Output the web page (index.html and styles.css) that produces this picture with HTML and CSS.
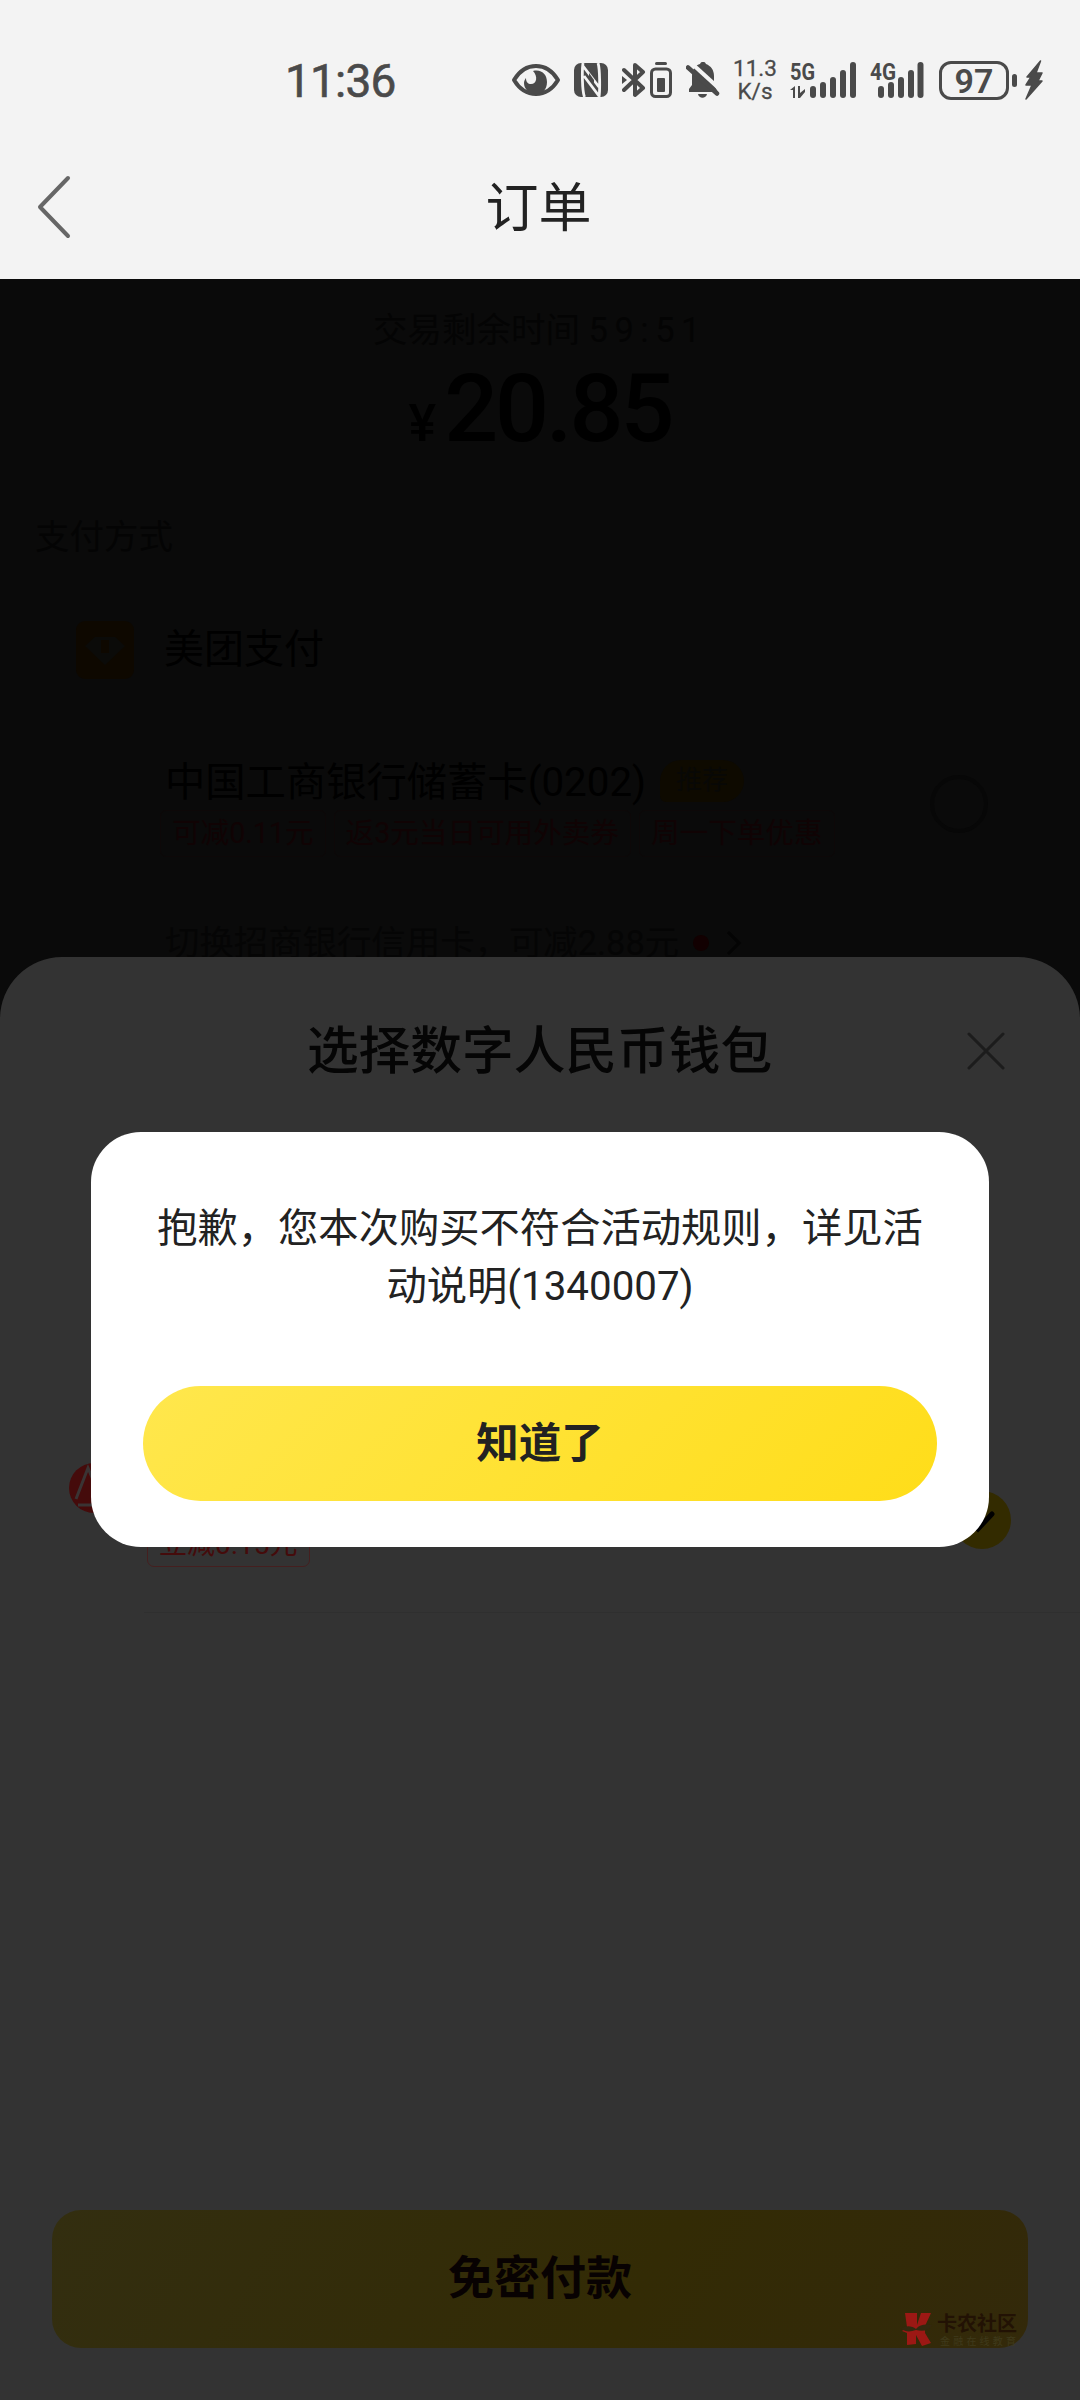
FILE: index.html
```html
<!DOCTYPE html>
<html lang="zh-CN">
<head>
  <meta charset="UTF-8">
  <meta name="viewport" content="width=device-width, initial-scale=1.0">
  <title>订单</title>
  <link rel="stylesheet" href="styles.css">
</head>
<body>
  <div class="screen">
    <header class="top">
      <div class="status-bar">
        <span class="time">11:36</span>
        <div class="status-icons">
          <svg class="eye" width="50" height="34" viewBox="0 0 50 34">
            <path d="M3 17C9 7 16 3 25 3s16 4 22 14c-6 10-13 14-22 14S9 27 3 17z" fill="none" stroke="#4a4a4a" stroke-width="4" stroke-linejoin="round"/>
            <path d="M22 8c9-2 14 4 14 11 0 8-5 12-11 12-7 0-12-5-12-11 0-2 1-4 2-5 0 4 2 6 5 6 6 0 7-8 2-13z"/>
          </svg>
          <svg class="nfc" width="34" height="34" viewBox="0 0 34 34">
            <rect width="34" height="34" rx="7"/>
            <path d="M10.500 34C8 28 8 6 9 0M24 0c2 6 2 28 1 34M9 3l16 21M10 13l15 20" fill="none" stroke="#f3f3f3" stroke-width="2.800"/>
            <path d="M15 15.500l5 6.500v-5l-5-7z"/>
          </svg>
          <svg class="bluetooth" width="50" height="36" viewBox="0 0 50 36">
            <path d="M2 8l19 18-8 7V3l8 7L2 28" fill="none" stroke="#4a4a4a" stroke-width="4" stroke-linejoin="round" stroke-linecap="round"/>
            <path d="M0 14l5 4-5 4z"/>
            <rect x="33" width="12" height="3" rx="1.500"/>
            <rect x="29.500" y="7" width="19" height="27.500" rx="4" fill="none" stroke="#4a4a4a" stroke-width="3"/>
            <rect x="35" y="16" width="8" height="14" rx="1"/>
          </svg>
          <svg class="bell" width="34" height="36" viewBox="0 0 34 36">
            <path d="M3 30V27l3-4V14C6 7 10 3 14 2c1-3 5-3 6 0 5 2 8 6 8 12v9l4 7zM12 32h9c-1 5-8 5-9 0z"/>
            <path d="M3 -1l34 31" stroke="#f3f3f3" stroke-width="4"/>
            <path d="M2 5.500l29 26" stroke="#4a4a4a" stroke-width="4.500" stroke-linecap="round"/>
          </svg>
          <div class="speed"><span>11.3</span><span>K/s</span></div>
          <svg class="signal-5g" width="68" height="40" viewBox="0 0 68 40">
            <text x="0" y="19.500" textLength="25" lengthAdjust="spacingAndGlyphs">5G</text>
            <path d="M0 30l5-4v12H3v-8zM8 26h2v7l5-4v3l-5 6H8z"/>
            <rect x="20" y="26" width="6" height="12" rx="3"/>
            <rect x="30" y="22" width="6" height="16" rx="3"/>
            <rect x="40" y="17" width="6" height="21" rx="3"/>
            <rect x="50" y="10" width="6" height="28" rx="3"/>
            <rect x="60" y="2" width="6" height="36" rx="3"/>
          </svg>
          <svg class="signal-4g" width="56" height="40" viewBox="0 0 56 40">
            <text x="0" y="19.500" textLength="26" lengthAdjust="spacingAndGlyphs">4G</text>
            <rect x="8" y="26" width="6" height="12" rx="3"/>
            <rect x="18" y="22" width="6" height="16" rx="3"/>
            <rect x="28" y="17" width="6" height="21" rx="3"/>
            <rect x="38" y="10" width="6" height="28" rx="3"/>
            <rect x="47.500" y="2" width="6" height="36" rx="3"/>
          </svg>
          <div class="battery">97</div>
          <div class="battery-tip"></div>
          <svg class="bolt" width="20" height="40" viewBox="0 0 20 40">
            <path d="M16.500 1L3 17h4l-5 8h6L2 39l16-18h-4l4-8h-6z" stroke="#4a4a4a" stroke-width="1.500" stroke-linejoin="round"/>
          </svg>
        </div>
      </div>
      <div class="nav-bar">
        <svg class="back" width="36" height="64" viewBox="0 0 36 64">
          <path d="M32 3L4 32l28 29" fill="none" stroke="#666" stroke-width="4" stroke-linecap="round" stroke-linejoin="round"/>
        </svg>
        <h1>订单</h1>
      </div>
    </header>

    <main class="cashier">
      <p class="countdown">交易剩余时间 <span>59:51</span></p>
      <p class="amount"><span>¥</span>20.85</p>
      <p class="section-title">支付方式</p>
      <div class="pay-row">
        <svg class="pay-logo" width="58" height="58" viewBox="0 0 58 58">
          <rect width="58" height="58" rx="9" fill="#0e0800"/>
          <path d="M9 25l10-9h20l10 9-20 19z" fill="#0b0b09"/>
          <path d="M25 19h8v13h-8z" fill="#0e0800"/>
        </svg>
        <span>美团支付</span>
      </div>
      <div class="card-row">
        <div class="card-info">
          <div class="card-name"><span>中国工商银行储蓄卡(0202)</span><em>推荐</em></div>
          <div class="tags">
            <span>可减0.11元</span><span>返3元当日可用外卖券</span><span>周一下单优惠</span>
          </div>
        </div>
        <div class="radio"></div>
      </div>
      <div class="switch-row">
        <span>切换招商银行信用卡，可减2.88元</span>
        <i class="dot"></i>
        <svg width="16" height="26" viewBox="0 0 16 26"><path d="M2 2l11 11L2 24" fill="none" stroke="#040404" stroke-width="3"/></svg>
      </div>
    </main>

    <section class="sheet">
      <div class="sheet-head">
        <h2>选择数字人民币钱包</h2>
        <svg class="close" width="38" height="38" viewBox="0 0 38 38">
          <path d="M2 2l34 34M36 2L2 36" stroke="#1c1c1c" stroke-width="3" stroke-linecap="round"/>
        </svg>
      </div>
      <div class="wallet">
        <svg class="wallet-logo" width="50" height="50" viewBox="0 0 50 50">
          <circle cx="25" cy="25" r="25" fill="#450b0b"/>
          <path d="M7 36L19 5l13 31" fill="none" stroke="#3a3434" stroke-width="3"/>
          <path d="M9 42h31" stroke="#3a3434" stroke-width="3"/>
        </svg>
        <span class="wallet-tag">立减0.15元</span>
        <svg class="checked" width="58" height="58" viewBox="0 0 58 58">
          <circle cx="29" cy="29" r="29" fill="#332b00"/>
          <path d="M16 29l9 9 14-15" fill="none" stroke="#000" stroke-width="5" stroke-linecap="round"/>
        </svg>
      </div>
      <div class="divider"></div>
      <button class="pay-btn">免密付款</button>
    </section>

    <div class="dialog">
      <p>抱歉，您本次购买不符合活动规则，详见活动说明(1340007)</p>
      <button class="ok-btn">知道了</button>
    </div>

    <div class="watermark">
      <svg width="34" height="36" viewBox="0 0 34 36">
        <path d="M5 2h12v12l4-12h10l-6 13v7l6 10-9 3-6-11v9l-9 1V22l-5-2 5-4z" fill="#9c1814"/>
        <path d="M1 18c5-4 11-3 15 0 4-5 10-5 16-4-3 5-8 7-16 5-6 2-10 2-15-1z" fill="#33290f"/>
      </svg>
      <div class="watermark-text"><b>卡农社区</b><small>金融在线教育</small></div>
    </div>
  </div>
</body>
</html>
```
FILE: styles.css
```css
* {
  box-sizing: border-box;
}
body {
  margin: 0;
  font-family: Roboto, 'Noto Sans CJK SC', sans-serif;
  background: #333;
}
h1, h2, p {
  margin: 0;
  font-weight: 400;
}
button {
  border: 0;
  padding: 0;
  font-family: inherit;
}
svg {
  display: block;
  flex: none;
}
.screen {
  position: relative;
  width: 1080px;
  height: 2400px;
  overflow: hidden;
}

/* status bar + title */
.top {
  height: 279px;
  background: #f3f3f3;
}
.status-bar {
  display: flex;
  height: 135px;
  padding: 60px 34px 0 285px;
  color: #4a4a4a;
}
.time {
  width: 226px;
  font-size: 46px;
  line-height: 42px;
  font-weight: 400;
  letter-spacing: -0.8px;
  -webkit-text-stroke: 0.6px #4a4a4a;
}
.status-icons {
  display: flex;
  height: 40px;
  align-items: center;
  fill: #4a4a4a;
}
.status-icons text {
  font-size: 23px;
  font-weight: 700;
}
.eye {
  margin-right: 13px;
}
.nfc {
  margin-right: 14px;
}
.bluetooth {
  margin-right: 14px;
}
.bell {
  margin-right: 12px;
}
.speed {
  display: flex;
  flex-direction: column;
  align-items: center;
  width: 46px;
  margin-right: 12px;
  font-size: 22.5px;
  line-height: 23px;
  -webkit-text-stroke: 0.3px #4a4a4a;
}
.speed span {
  height: 23px;
}
.signal-5g {
  margin-right: 12px;
}
.signal-4g {
  margin-right: 13px;
}
.battery {
  width: 70px;
  height: 39px;
  border: 3px solid #4a4a4a;
  border-radius: 12px;
  font-size: 34px;
  line-height: 34px;
  font-weight: 600;
  text-align: center;
}
.battery-tip {
  width: 5px;
  height: 13px;
  margin: 0 7px 0 3px;
  border-radius: 3px;
  background: #4a4a4a;
}
.nav-bar {
  display: flex;
  align-items: center;
  height: 144px;
  padding: 0 36px;
}
.nav-bar h1 {
  flex: 1;
  padding: 4px 39px 0 0;
  font-size: 53px;
  line-height: 70px;
  color: #222;
  text-align: center;
}

/* dimmed cashier page */
.cashier {
  height: 740px;
  padding-top: 30px;
  background: #0a0a0a;
  color: #000;
}
.countdown {
  font-size: 34.5px;
  line-height: 42px;
  text-align: center;
  color: #040404;
}
.countdown span {
  letter-spacing: 6.5px;
}
.amount {
  height: 149px;
  padding-top: 4px;
  font-size: 95px;
  line-height: 108px;
  font-weight: 500;
  letter-spacing: -3px;
  text-align: center;
}
.amount span {
  margin-right: 11px;
  font-size: 52px;
}
.section-title {
  padding-left: 35px;
  font-size: 34.5px;
  line-height: 74px;
  color: #040404;
}
.pay-row {
  display: flex;
  align-items: center;
  gap: 28px;
  height: 58px;
  margin-top: 47px;
  padding-left: 76px;
  font-size: 40px;
}
.pay-row span {
  height: 50px;
  padding-left: 2px;
  line-height: 50px;
}
.card-row {
  display: flex;
  justify-content: space-between;
  margin-top: 76px;
  padding: 0 92px 0 163px;
}
.card-name {
  display: flex;
  align-items: center;
  height: 52px;
  padding-left: 2px;
  font-size: 40.3px;
  line-height: 56px;
}
.card-name span {
  height: 52px;
}
.card-name em {
  height: 42px;
  margin-left: 14px;
  padding: 0 16px;
  border-radius: 21px 21px 21px 6px;
  background: #0e0a00;
  font-size: 26px;
  line-height: 40px;
  font-style: normal;
  color: #080806;
}
.tags {
  display: flex;
  gap: 8px;
  margin: 3px 0 0 -3px;
  font-size: 28.6px;
  line-height: 45px;
  color: #100304;
}
.tags span {
  padding: 0 11px;
  border: 1px solid #0d0808;
  border-radius: 6px;
}
.radio {
  width: 58px;
  height: 58px;
  margin-top: 20px;
  border: 4px solid #070707;
  border-radius: 50%;
}
.switch-row {
  display: flex;
  align-items: center;
  margin-top: 61px;
  padding-left: 165px;
  font-size: 34.4px;
  line-height: 50px;
  color: #050505;
}
.dot {
  width: 16px;
  height: 16px;
  margin: 0 17px 0 14px;
  border-radius: 50%;
  background: #120001;
}

/* wallet sheet */
.sheet {
  position: absolute;
  left: 0;
  right: 0;
  top: 957px;
  bottom: 0;
  display: flex;
  flex-direction: column;
  padding-bottom: 52px;
  border-radius: 62px 62px 0 0;
  background: #333;
}
.sheet-head {
  display: flex;
  align-items: center;
  height: 188px;
  padding: 0 75px 0 112px;
}
.sheet-head h2 {
  flex: 1;
  padding-top: 2px;
  font-size: 51.7px;
  line-height: 70px;
  font-weight: 500;
  text-align: center;
  color: #050505;
}
.wallet {
  display: flex;
  align-items: flex-start;
  height: 467px;
  padding: 318px 69px 0;
}
.wallet-logo {
  margin-right: 28px;
}
.wallet-tag {
  height: 47px;
  margin-top: 57px;
  padding: 0 11px;
  border: 1px solid #451f1f;
  border-radius: 7px;
  font-size: 28px;
  line-height: 48px;
  color: #450b0b;
}
.checked {
  margin: 28px 0 0 auto;
}
.divider {
  height: 1px;
  margin-left: 144px;
  background: #2f2f2f;
}
.pay-btn {
  height: 138px;
  margin: auto 52px 0;
  padding-bottom: 10px;
  border-radius: 29px;
  background: linear-gradient(120deg, #332e10, #332b05 60%, #33290a);
  font-size: 46px;
  font-weight: 700;
  color: #080202;
}

.dialog {
  position: absolute;
  left: 91px;
  top: 1132px;
  width: 898px;
  height: 415px;
  padding: 68px 52px 0;
  border-radius: 50px;
  background: #fff;
}
.dialog p {
  padding: 0 4px;
  font-size: 40.3px;
  line-height: 58px;
  text-align: center;
  color: #222;
}
.ok-btn {
  width: 794px;
  height: 115px;
  margin-top: 70px;
  padding-bottom: 9px;
  border-radius: 58px;
  background: linear-gradient(135deg, #ffe74d, #ffdd19);
  font-size: 42.5px;
  font-weight: 700;
  color: #222;
}

.watermark {
  position: absolute;
  left: 900px;
  top: 2311px;
  display: flex;
  gap: 3px;
}
.watermark-text {
  display: flex;
  flex-direction: column;
  padding-top: 1px;
}
.watermark-text b {
  font-size: 20px;
  line-height: 24px;
  color: #221204;
}
.watermark-text small {
  padding-left: 3px;
  font-size: 10px;
  line-height: 11px;
  letter-spacing: 3.2px;
  color: #3f3a1c;
}
```
